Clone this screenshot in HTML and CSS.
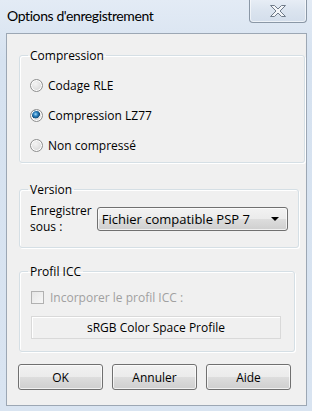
FILE: index.html
```html
<!DOCTYPE html>
<html lang="fr">
<head>
    <meta charset="UTF-8">
    <title>Options d'enregistrement</title>
    <link rel="stylesheet" href="styles.css">
</head>
<body>
    <div class="window">
        <div class="titlebar">
            <span class="title">Options d'enregistrement</span>
            <button class="close" aria-label="Fermer">
                <svg width="18" height="14" viewBox="0 0 18 14">
                    <path d="M1.5 1.5 L5.5 1.5 L9 5 L12.5 1.5 L16.5 1.5 L11 7 L16.5 12.5 L12.5 12.5 L9 9 L5.5 12.5 L1.5 12.5 L7 7 Z"
                          fill="#f4f6f9" stroke="#6f7b89" stroke-width="1" stroke-linejoin="round"/>
                </svg>
            </button>
        </div>

        <div class="client">
            <fieldset class="group group-wide">
                <legend>Compression</legend>
                <label class="radio-row"><input type="radio" name="comp"> Codage RLE</label>
                <label class="radio-row"><input type="radio" name="comp" checked> Compression LZ77</label>
                <label class="radio-row"><input type="radio" name="comp"> Non compressé</label>
            </fieldset>

            <fieldset class="group">
                <legend>Version</legend>
                <div class="version-row">
                    <label class="version-label" for="ver">Enregistrer<br>sous :</label>
                    <div class="select" id="ver">
                        <span>Fichier compatible PSP 7</span>
                        <span class="arrow"></span>
                    </div>
                </div>
            </fieldset>

            <fieldset class="group">
                <legend>Profil ICC</legend>
                <label class="check-row"><input type="checkbox" disabled> Incorporer le profil ICC :</label>
                <div class="profile-box">sRGB Color Space Profile</div>
            </fieldset>

            <div class="buttons">
                <button class="btn">OK</button>
                <button class="btn">Annuler</button>
                <button class="btn">Aide</button>
            </div>
        </div>
    </div>
</body>
</html>
```

FILE: styles.css
```css
body {
    margin: 0;
    font-family: 'Open Sans', 'Noto Sans', sans-serif;
    font-size: 12px;
    color: #000;
    background: #d9e4f1;
}

.window {
    width: 312px;
    height: 411px;
    display: flex;
    flex-direction: column;
    background: linear-gradient(#e3ebf5, #d6e2f0 60px, #d9e4f1);
}

.titlebar {
    height: 33px;
    display: flex;
    justify-content: space-between;
    align-items: flex-start;
}

.title {
    font-family: Lato, 'Open Sans', sans-serif;
    font-size: 14px;
    letter-spacing: -0.4px;
    margin: 6px 0 0 7px;
    line-height: 20px;
    color: #000;
}

.close {
    width: 58px;
    height: 24px;
    margin: -1px 5px 0 0;
    padding: 0;
    border: 1px solid #8a97a6;
    border-top: none;
    border-radius: 0 0 4px 4px;
    background: linear-gradient(#e8eef6, #dbe4ef 50%, #d3deeb);
    box-shadow: inset 0 0 0 1px rgba(255, 255, 255, 0.6);
    display: flex;
    align-items: center;
    justify-content: center;
}

.client {
    flex: 1;
    margin: 0 5px 5px 6px;
    border: 1px solid #9ca7b4;
    background: #f0f0f0;
    display: flex;
    flex-direction: column;
}

.group {
    margin: 0 11px 0 12px;
    padding: 0 10px;
    border: 1px solid #d5dfe5;
    border-radius: 3px;
    box-shadow: inset 1px 1px 0 #fff, 1px 1px 0 #fff;
}

.group legend {
    padding: 0 2px;
    margin-left: -2px;
    line-height: 15px;
}

.group-wide {
    margin-top: 14px;
    margin-right: 1px;
    padding-top: 7px;
    padding-bottom: 2px;
}

.radio-row {
    height: 30px;
    display: flex;
    align-items: center;
    gap: 5px;
}

.radio-row input {
    appearance: none;
    margin: 0;
    width: 13px;
    height: 13px;
    border-radius: 50%;
    border: 1px solid #8e8f8f;
    background: radial-gradient(circle at 40% 35%, #f4f4f4, #dadada 70%, #cfcfcf);
    box-shadow: inset 0 0 0 1px #fff;
}

.radio-row input:checked {
    background:
        radial-gradient(circle at 42% 38%, #a9dcf6 0, #2d84c3 2px, #134d7b 4px, transparent 4.5px),
        radial-gradient(circle at 40% 35%, #f4f4f4, #dadada 70%, #cfcfcf);
}

.group:nth-of-type(2) {
    margin-top: 19px;
    padding-top: 6px;
    padding-bottom: 12px;
}

.version-row {
    display: flex;
    align-items: center;
    gap: 5px;
}

.version-label {
    line-height: 16px;
}

.select {
    width: 177px;
    height: 22px;
    border: 1px solid #707070;
    border-radius: 3px;
    background: linear-gradient(#f2f2f2, #ebebeb 50%, #dddddd 51%, #cfcfcf);
    box-shadow: inset 0 0 0 1px rgba(255, 255, 255, 0.7);
    display: flex;
    align-items: center;
    justify-content: space-between;
    padding: 0 8px 0 4px;
    font-size: 13px;
}

.arrow {
    width: 0;
    height: 0;
    border-left: 4px solid transparent;
    border-right: 4px solid transparent;
    border-top: 4px solid #000;
}

.group:nth-of-type(3) {
    margin-top: 16px;
    padding-top: 10px;
    padding-bottom: 12px;
}

.check-row {
    height: 17px;
    display: flex;
    align-items: center;
    gap: 6px;
    padding-left: 1px;
    color: #a0a0a0;
}

.check-row input {
    appearance: none;
    margin: 0;
    width: 13px;
    height: 13px;
    border: 1px solid #b1b1b1;
    background: linear-gradient(135deg, #e6e6e6, #f7f7f7);
    box-sizing: border-box;
}

.profile-box {
    margin: 10px 0 0 1px;
    width: 248px;
    height: 21px;
    border: 1px solid #d9d9d9;
    background: #f0f0f0;
    box-shadow: inset 1px 1px 0 #fff;
    display: flex;
    align-items: center;
    justify-content: center;
}

.buttons {
    margin: 12px 0 0 11px;
    display: flex;
    gap: 9px;
}

.btn {
    width: 85px;
    height: 26px;
    font-family: inherit;
    font-size: 12px;
    border: 1px solid #707070;
    border-radius: 3px;
    background: linear-gradient(#f2f2f2, #ebebeb 50%, #dddddd 51%, #cfcfcf);
    box-shadow: inset 0 0 0 1px rgba(255, 255, 255, 0.7);
    padding: 0;
}
```
